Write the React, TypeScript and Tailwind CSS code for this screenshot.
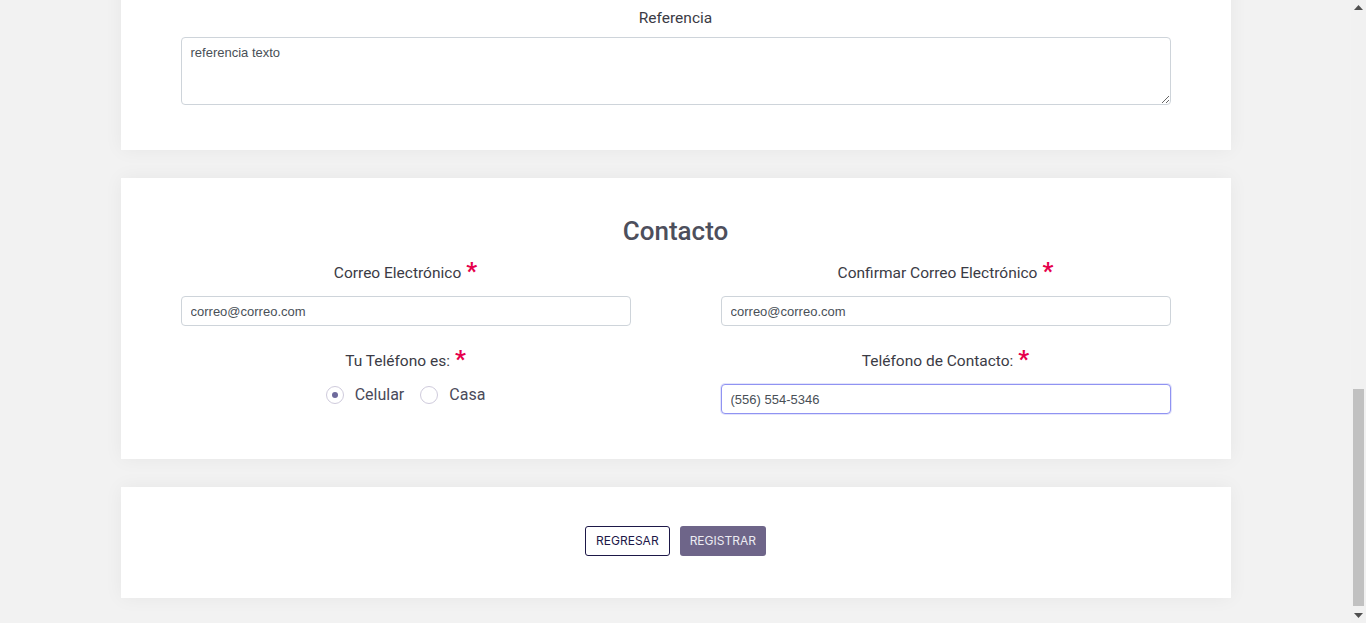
import { useLayoutEffect, useRef, useState } from 'react';

// ── Small building blocks ─────────────────────────────────────
function Label({ text, required }: { text: string; required?: boolean }) {
  return (
    <label className="block text-center text-[15.5px] leading-[24px] text-[#3b3b45]">
      {text}
      {required && (
        <span className="relative top-[1px] ml-[5px] text-[24px] leading-[0] font-bold text-[#e6004c]">*</span>
      )}
    </label>
  );
}

function TextInput({ value, focused }: { value: string; focused?: boolean }) {
  return (
    <input
      defaultValue={value}
      className={
        focused
          ? 'block w-full h-[30px] rounded-[4px] border border-[#9093f2] bg-white pl-[9px] text-[13px] text-[#495057] shadow-[0_0_0_1px_rgba(143,146,243,0.25)] outline-none'
          : 'block w-full h-[30px] rounded-[4px] border border-[#ced4da] bg-white pl-[9px] text-[13px] text-[#495057] outline-none'
      }
      style={{ fontFamily: '"Liberation Sans", Arial, sans-serif' }}
    />
  );
}

function Radio({ label, checked, onClick }: { label: string; checked: boolean; onClick: () => void }) {
  return (
    <button type="button" onClick={onClick} className="flex items-center gap-[11px]">
      <span className="flex items-center justify-center w-[18px] h-[18px] rounded-full border border-[#cfcbdc] bg-white">
        {checked && <span className="w-[6px] h-[6px] rounded-full bg-[#6e6a9c]" />}
      </span>
      <span className="text-[16px] text-[#4a4a5a]">{label}</span>
    </button>
  );
}

function Card({ children, className }: { children: React.ReactNode; className?: string }) {
  return <section className={`bg-white shadow-[0_0_18px_rgba(0,0,0,0.05)] ${className ?? ''}`}>{children}</section>;
}

// classic scrollbar, drawn because the headless browser hides native ones
function Scrollbar() {
  return (
    <aside className="w-[15px] h-screen shrink-0 flex flex-col bg-[#f1f1f1]">
      <div className="h-[15px] flex items-center justify-center">
        <svg width="9" height="5" viewBox="0 0 9 5"><path d="M0 5 L4.5 0 L9 5 Z" fill="#505050" /></svg>
      </div>
      <div className="flex-1 flex flex-col justify-end items-center pb-[2px]">
        <div className="w-[11px] h-[217px] bg-[#c1c1c1]" />
      </div>
      <div className="h-[15px] flex items-center justify-center">
        <svg width="9" height="5" viewBox="0 0 9 5"><path d="M0 0 L9 0 L4.5 5 Z" fill="#505050" /></svg>
      </div>
    </aside>
  );
}

export default function App() {
  const scrollRef = useRef<HTMLDivElement>(null);
  const [phoneType, setPhoneType] = useState<'celular' | 'casa'>('celular');

  // the screenshot shows the form scrolled to the very bottom
  useLayoutEffect(() => {
    const el = scrollRef.current;
    if (el) el.scrollTop = el.scrollHeight;
  }, []);

  return (
    <div className="flex h-screen bg-[#f2f2f2]" style={{ fontFamily: 'Roboto, "Noto Sans", sans-serif' }}>
      <div ref={scrollRef} className="flex-1 h-screen overflow-y-scroll [scrollbar-width:none]">
        <div className="w-[1110px] mx-auto pt-[25px] pb-[25px] flex flex-col gap-[28px]">
          {/* ── Datos personales (above the fold) ───────────────── */}
          <Card className="px-[60px] pt-[38px] pb-[45px]">
            <h2 className="text-center text-[26px] leading-[31px] font-medium text-[#4d4f5c] mb-[14px]">Datos Personales</h2>
            <div className="grid grid-cols-2 gap-x-[90px] gap-y-[23px]">
              <div>
                <Label text="Nombre(s)" required />
                <div className="mt-[11px]"><TextInput value="Juan" /></div>
              </div>
              <div>
                <Label text="Apellido Paterno" required />
                <div className="mt-[11px]"><TextInput value="Pérez" /></div>
              </div>
              <div>
                <Label text="Apellido Materno" />
                <div className="mt-[11px]"><TextInput value="López" /></div>
              </div>
              <div>
                <Label text="Fecha de Nacimiento" required />
                <div className="mt-[11px]"><TextInput value="01/01/1990" /></div>
              </div>
              <div>
                <Label text="CURP" required />
                <div className="mt-[11px]"><TextInput value="PELJ900101HDFRPN09" /></div>
              </div>
              <div>
                <Label text="RFC" />
                <div className="mt-[11px]"><TextInput value="PELJ900101" /></div>
              </div>
            </div>
          </Card>

          {/* ── Domicilio + Referencia ──────────────────────────── */}
          <Card className="px-[60px] pt-[38px] pb-[45px]">
            <h2 className="text-center text-[26px] leading-[31px] font-medium text-[#4d4f5c] mb-[14px]">Domicilio</h2>
            <div className="grid grid-cols-2 gap-x-[90px] gap-y-[23px]">
              <div>
                <Label text="Calle" required />
                <div className="mt-[11px]"><TextInput value="Av. Reforma" /></div>
              </div>
              <div>
                <Label text="Número" required />
                <div className="mt-[11px]"><TextInput value="123" /></div>
              </div>
              <div>
                <Label text="Colonia" required />
                <div className="mt-[11px]"><TextInput value="Centro" /></div>
              </div>
              <div>
                <Label text="Código Postal" required />
                <div className="mt-[11px]"><TextInput value="06000" /></div>
              </div>
            </div>
            <div className="mt-[23px]">
              <label className="block text-center text-[15.5px] leading-[24px] text-[#3b3b45]">Referencia</label>
              <textarea
                defaultValue="referencia texto"
                className="mt-[7px] block w-full h-[68px] rounded-[4px] border border-[#ced4da] bg-white px-[9px] py-[5px] text-[13px] text-[#495057] outline-none"
                style={{ fontFamily: '"Liberation Sans", Arial, sans-serif' }}
              />
            </div>
          </Card>

          {/* ── Contacto ────────────────────────────────────────── */}
          <Card className="px-[60px] pt-[38px] pb-[45px]">
            <h2 className="text-center text-[26px] leading-[31px] font-medium text-[#4d4f5c] mb-[14px]">Contacto</h2>
            <div className="grid grid-cols-2 gap-x-[90px] gap-y-[23px]">
              <div>
                <Label text="Correo Electrónico" required />
                <div className="mt-[11px]"><TextInput value="correo@correo.com" /></div>
              </div>
              <div>
                <Label text="Confirmar Correo Electrónico" required />
                <div className="mt-[11px]"><TextInput value="correo@correo.com" /></div>
              </div>
              <div>
                <Label text="Tu Teléfono es:" required />
                <div className="mt-[6px] h-[31px] flex items-center justify-center gap-[16px]">
                  <Radio label="Celular" checked={phoneType === 'celular'} onClick={() => setPhoneType('celular')} />
                  <Radio label="Casa" checked={phoneType === 'casa'} onClick={() => setPhoneType('casa')} />
                </div>
              </div>
              <div>
                <Label text="Teléfono de Contacto:" required />
                <div className="mt-[11px]"><TextInput value="(556) 554-5346" focused /></div>
              </div>
            </div>
          </Card>

          {/* ── Actions ─────────────────────────────────────────── */}
          <Card className="pt-[39px] pb-[42px] flex justify-center gap-[10px]">
            <button
              type="button"
              className="h-[30px] px-[10px] rounded-[3px] border border-[#1d1848] bg-white text-[12px] text-[#1d1848] uppercase"
              style={{ fontFamily: 'Inter, "Open Sans", sans-serif' }}
            >
              Regresar
            </button>
            <button
              type="button"
              className="h-[30px] px-[10px] rounded-[3px] bg-[#6e6589] text-[12px] text-[#ecebf2] uppercase"
              style={{ fontFamily: 'Inter, "Open Sans", sans-serif' }}
            >
              Registrar
            </button>
          </Card>
        </div>
      </div>
      <Scrollbar />
    </div>
  );
}
